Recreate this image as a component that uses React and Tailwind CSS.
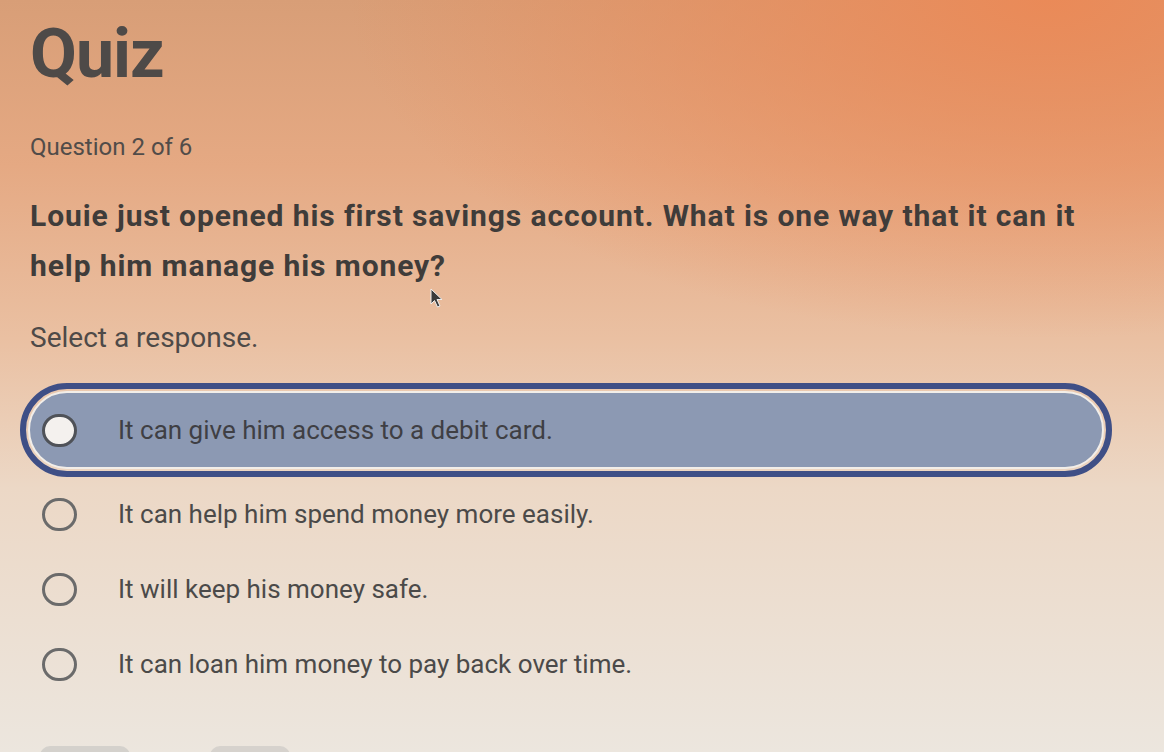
import React, { useState } from 'react';

const options = [
  'It can give him access to a debit card.',
  'It can help him spend money more easily.',
  'It will keep his money safe.',
  'It can loan him money to pay back over time.',
];

function Radio({ selected }) {
  return (
    <span
      className={`shrink-0 w-[35px] h-[33px] rounded-full border-[3px] ${
        selected ? 'bg-[#f4f1ee] border-[#4f5258]' : 'bg-transparent border-[#6b6b6b]'
      }`}
    />
  );
}

function Cursor() {
  return (
    <svg className="absolute left-[430px] top-[288px] w-[14px] h-[20px]" viewBox="0 0 14 20">
      <path d="M1 1 L1 16 L4.5 12.5 L7.5 19 L10 18 L7 11.5 L12 11.5 Z" fill="#3a3a3a" stroke="#eee" strokeWidth="1" />
    </svg>
  );
}

export default function App() {
  const [answer, setAnswer] = useState(0);

  return (
    <div className="relative w-[1164px] h-[752px] overflow-hidden font-['Roboto',sans-serif] text-[#4b4a49] bg-[radial-gradient(ellipse_60%_45%_at_90%_0%,#ea8a58_0%,rgba(234,138,88,0)_100%),linear-gradient(180deg,#d89e77_0%,#e5a983_22%,#eac0a2_45%,#ecd8c6_65%,#ece6de_100%)]">
      <div className="px-[30px] pt-[14px]">
        <h1 className="text-[68px] font-bold leading-[80px] tracking-[-1px] text-[#4e4a48]">Quiz</h1>

        <p className="mt-[39px] text-[24px] leading-[28px] text-[#514c49]">Question 2 of 6</p>

        <p className="mt-[30px] text-[30px] font-bold leading-[50px] text-[#3f3c3a] w-[1095px] tracking-[0.9px]">
          Louie just opened his first savings account. What is one way that it can it help him manage his money?
        </p>

        <p className="mt-[31px] text-[28px] leading-[32px] text-[#4e4a48]">Select a response.</p>
      </div>

      <div className="mt-[29px] flex flex-col">
        {options.map((opt, i) =>
          answer === i ? (
            <button
              key={opt}
              onClick={() => setAnswer(i)}
              className="mx-[20px] w-[1092px] h-[94px] rounded-full border-[6px] border-[#3f4f86] p-[2px] text-left"
            >
              <span className="flex items-center gap-[41px] h-full rounded-full border-2 border-[#f2eee9] bg-[#8c99b3] pl-[12px]">
                <Radio selected />
                <span className="text-[26px] text-[#3f3f44]">{opt}</span>
              </span>
            </button>
          ) : (
            <button
              key={opt}
              onClick={() => setAnswer(i)}
              className="flex items-center gap-[41px] h-[75px] pl-[42px] text-left"
            >
              <Radio />
              <span className="text-[26px]">{opt}</span>
            </button>
          )
        )}
      </div>

      <div className="absolute left-[40px] bottom-[-20px] w-[90px] h-[26px] rounded-[10px] bg-[#d4d1cc]" />
      <div className="absolute left-[210px] bottom-[-20px] w-[80px] h-[26px] rounded-[10px] bg-[#d6d2cd]" />

      <Cursor />
    </div>
  );
}
